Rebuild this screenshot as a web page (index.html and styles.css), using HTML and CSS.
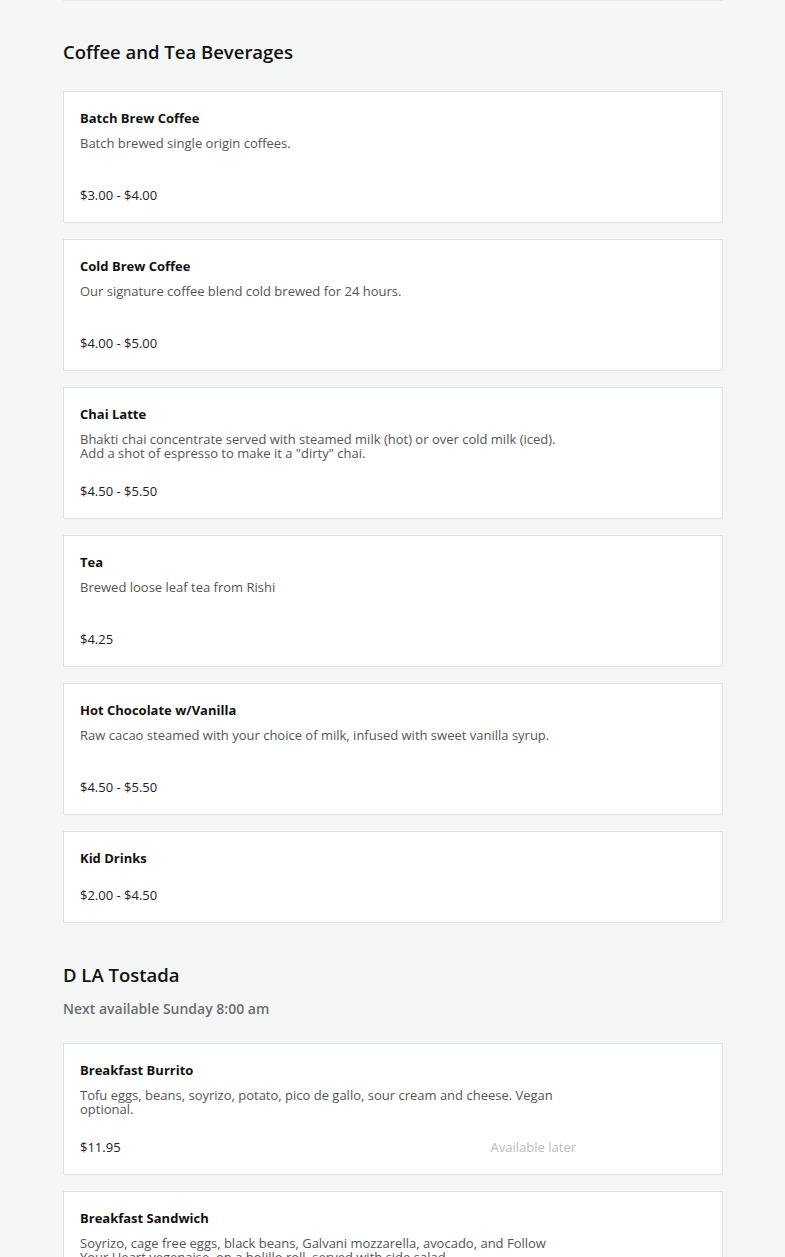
FILE: index.html
```html
<!DOCTYPE html>
<html>
<head>
<meta charset="utf-8">
<link rel="stylesheet" href="styles.css">
</head>
<body>
<div class="page">
  <div class="prev-edge"></div>

  <section class="section">
    <h2 class="section-title">Coffee and Tea Beverages</h2>
    <div class="items">
      <div class="card">
        <div class="card-title">Batch Brew Coffee</div>
        <div class="card-body">
          <p class="desc">Batch brewed single origin coffees.</p>
          <div class="row"><span class="price">$3.00 - $4.00</span></div>
        </div>
      </div>
      <div class="card">
        <div class="card-title">Cold Brew Coffee</div>
        <div class="card-body">
          <p class="desc">Our signature coffee blend cold brewed for 24 hours.</p>
          <div class="row"><span class="price">$4.00 - $5.00</span></div>
        </div>
      </div>
      <div class="card">
        <div class="card-title">Chai Latte</div>
        <div class="card-body">
          <p class="desc">Bhakti chai concentrate served with steamed milk (hot) or over cold milk (iced). Add a shot of espresso to make it a "dirty" chai.</p>
          <div class="row"><span class="price">$4.50 - $5.50</span></div>
        </div>
      </div>
      <div class="card">
        <div class="card-title">Tea</div>
        <div class="card-body">
          <p class="desc">Brewed loose leaf tea from Rishi</p>
          <div class="row"><span class="price">$4.25</span></div>
        </div>
      </div>
      <div class="card">
        <div class="card-title">Hot Chocolate w/Vanilla</div>
        <div class="card-body">
          <p class="desc">Raw cacao steamed with your choice of milk, infused with sweet vanilla syrup.</p>
          <div class="row"><span class="price">$4.50 - $5.50</span></div>
        </div>
      </div>
      <div class="card">
        <div class="card-title">Kid Drinks</div>
        <div class="card-body">
          <div class="row no-desc"><span class="price">$2.00 - $4.50</span></div>
        </div>
      </div>
    </div>
  </section>

  <section class="section">
    <h2 class="section-title">D LA Tostada</h2>
    <p class="availability">Next available Sunday 8:00 am</p>
    <div class="items">
      <div class="card">
        <div class="card-title">Breakfast Burrito</div>
        <div class="card-body">
          <p class="desc">Tofu eggs, beans, soyrizo, potato, pico de gallo, sour cream and cheese. Vegan optional.</p>
          <div class="row"><span class="price">$11.95</span><span class="later">Available later</span></div>
        </div>
      </div>
      <div class="card">
        <div class="card-title">Breakfast Sandwich</div>
        <div class="card-body">
          <p class="desc">Soyrizo, cage free eggs, black beans, Galvani mozzarella, avocado, and Follow Your Heart vegenaise, on a bolillo roll, served with side salad.</p>
          <div class="row"><span class="price">$12.95</span><span class="later">Available later</span></div>
        </div>
      </div>
    </div>
  </section>
</div>
</body>
</html>
```

FILE: styles.css
```css
* { box-sizing: border-box; }

html, body {
  margin: 0;
  padding: 0;
  background: #f4f7f6;
}

body {
  font-family: "Open Sans", "Liberation Sans", sans-serif;
  color: #111;
}

.page {
  width: 660px;
  margin: 0 0 0 63px;
}

.prev-edge {
  height: 1px;
  border-bottom: 1px solid #e3e8e7;
}

.section {
  margin-top: 39px;
}

.section + .section {
  margin-top: 40px;
}

.section-title {
  margin: 0;
  font-size: 18.5px;
  line-height: 24px;
  font-weight: 600;
  color: #111;
}

.availability {
  margin: 13px 0 0;
  font-size: 14px;
  line-height: 18px;
  font-weight: 600;
  color: #6b6f6e;
}

.items {
  display: flex;
  flex-direction: column;
  gap: 16px;
  margin-top: 27px;
}

.availability + .items {
  margin-top: 25px;
}

.card {
  background: #fff;
  border: 1px solid #dde3e2;
  padding: 19px 16px 20px;
}

.card-title {
  font-size: 13px;
  line-height: 14px;
  font-weight: 700;
  color: #111;
}

.card-body {
  width: 496px;
}

.desc {
  margin: 11px 0 0;
  min-height: 42px;
  font-size: 13px;
  line-height: 14px;
  color: #555;
}

.row {
  display: flex;
  justify-content: space-between;
  margin-top: 10px;
  font-size: 13px;
  line-height: 14px;
}

.row.no-desc {
  margin-top: 23px;
}

.price {
  color: #222;
}

.later {
  color: #b9bcbb;
}
```
